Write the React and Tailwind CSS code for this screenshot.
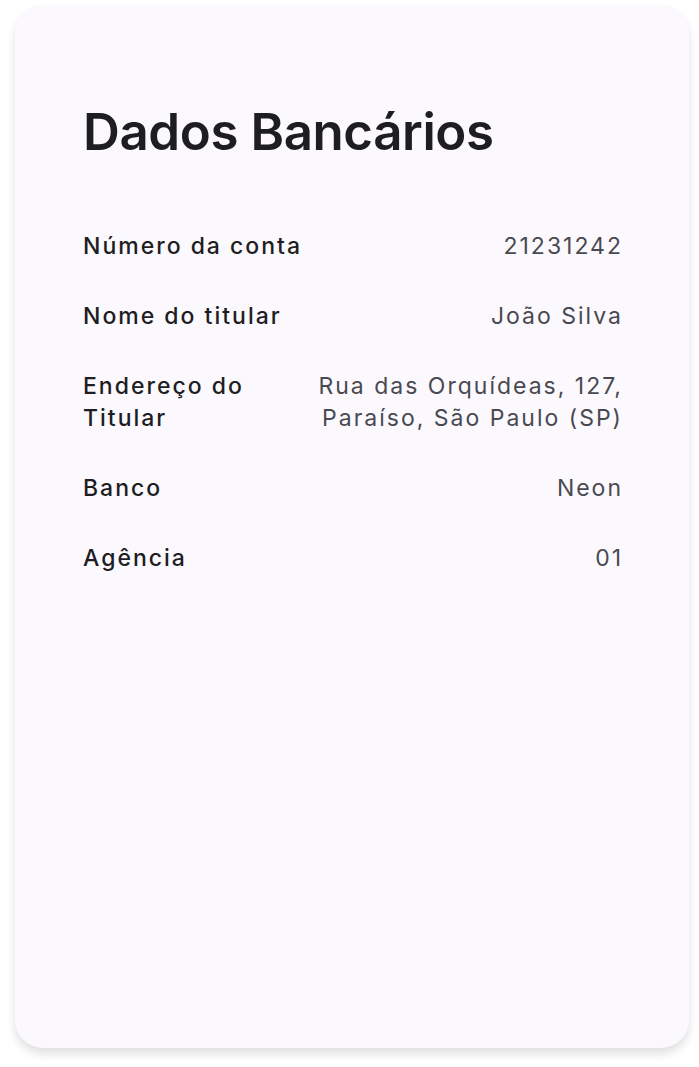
export default function App() {
  const rows = [
    ["Número da conta", "21231242"],
    ["Nome do titular", "João Silva"],
    ["Endereço do Titular", "Rua das Orquídeas, 127, Paraíso, São Paulo (SP)"],
    ["Banco", "Neon"],
    ["Agência", "01"],
  ];
  return (
    <div className="w-[699px] h-[1067px] bg-white pt-[5px] pl-[15px]" style={{ fontFamily: "Inter, 'Noto Sans', sans-serif" }}>
      <div className="w-[674px] h-[1043px] rounded-[28px] bg-[#fbf9fe] shadow-[0_6px_10px_rgba(0,0,0,0.12)] pl-[68px] pr-[67px] pt-[101px]">
        <h1 className="text-[51px] leading-[51px] font-semibold text-[#1e1d22] tracking-[-0.4px]">Dados Bancários</h1>
        <div className="mt-[73px] flex flex-col gap-[38px]">
          {rows.map(([k, v]) => (
            <div key={k} className="flex justify-between gap-6 text-[23px] leading-[32px] tracking-[2px]">
              <div className="font-medium text-[#1e1d22] max-w-[230px]">{k}</div>
              <div className="text-right text-[#4a4950] max-w-[330px] -mr-[1px]">{v}</div>
            </div>
          ))}
        </div>
      </div>
    </div>
  );
}
